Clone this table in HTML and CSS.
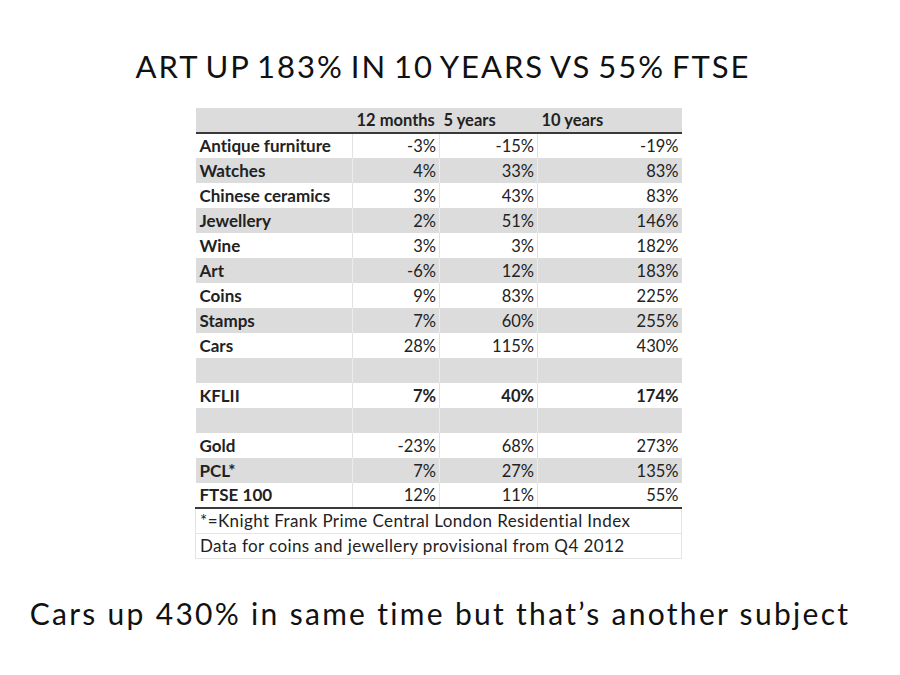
FILE: index.html
```html
<!DOCTYPE html>
<html>
<head>
<meta charset="utf-8">
<link rel="stylesheet" href="styles.css">
</head>
<body>
<div class="slide">
  <h1 class="title">ART UP 183% IN 10 YEARS VS 55% FTSE</h1>
  <div class="table-wrap">
    <table class="data">
      <colgroup>
        <col class="c1"><col class="c2"><col class="c3"><col class="c4">
      </colgroup>
      <thead>
        <tr class="g"><th></th><th>12 months</th><th>5 years</th><th>10 years</th></tr>
      </thead>
      <tbody>
        <tr class="w"><td class="lab">Antique furniture</td><td>-3%</td><td>-15%</td><td>-19%</td></tr>
        <tr class="g"><td class="lab">Watches</td><td>4%</td><td>33%</td><td>83%</td></tr>
        <tr class="w"><td class="lab">Chinese ceramics</td><td>3%</td><td>43%</td><td>83%</td></tr>
        <tr class="g"><td class="lab">Jewellery</td><td>2%</td><td>51%</td><td>146%</td></tr>
        <tr class="w"><td class="lab">Wine</td><td>3%</td><td>3%</td><td>182%</td></tr>
        <tr class="g"><td class="lab">Art</td><td>-6%</td><td>12%</td><td>183%</td></tr>
        <tr class="w"><td class="lab">Coins</td><td>9%</td><td>83%</td><td>225%</td></tr>
        <tr class="g"><td class="lab">Stamps</td><td>7%</td><td>60%</td><td>255%</td></tr>
        <tr class="w"><td class="lab">Cars</td><td>28%</td><td>115%</td><td>430%</td></tr>
        <tr class="g blank"><td></td><td></td><td></td><td></td></tr>
        <tr class="w bold"><td class="lab">KFLII</td><td>7%</td><td>40%</td><td>174%</td></tr>
        <tr class="g blank"><td></td><td></td><td></td><td></td></tr>
        <tr class="w"><td class="lab">Gold</td><td>-23%</td><td>68%</td><td>273%</td></tr>
        <tr class="g"><td class="lab">PCL*</td><td>7%</td><td>27%</td><td>135%</td></tr>
        <tr class="w last"><td class="lab">FTSE 100</td><td>12%</td><td>11%</td><td>55%</td></tr>
      </tbody>
      <tfoot>
        <tr class="note first"><td colspan="4">*=Knight Frank Prime Central London Residential Index</td></tr>
        <tr class="note"><td colspan="4">Data for coins and jewellery provisional from Q4 2012</td></tr>
      </tfoot>
    </table>
  </div>
  <p class="caption">Cars up 430% in same time but that’s another subject</p>
</div>
</body>
</html>
```
FILE: styles.css
```css
html, body {
  margin: 0;
  padding: 0;
  background: #fff;
}
.slide {
  width: 900px;
  height: 675px;
  display: flex;
  flex-direction: column;
  color: #111;
}
.title {
  margin: 0;
  padding: 46px 14px 0 0;
  height: 64px;
  box-sizing: border-box;
  text-align: center;
  font-family: Lato, "Open Sans", sans-serif;
  font-weight: 400;
  font-size: 31px;
  line-height: 40px;
  letter-spacing: 2px;
  word-spacing: -3px;
  white-space: nowrap;
  font-variant-ligatures: none;
}
.table-wrap {
  padding: 44px 0 0 195px;
}
.data {
  border-collapse: collapse;
  table-layout: fixed;
  width: 486px;
  font-family: Lato, "Open Sans", sans-serif;
  font-size: 16.5px;
  color: #222;
  font-variant-ligatures: none;
}
.c1 { width: 157px; }
.c2 { width: 87px; }
.c3 { width: 98px; }
.c4 { width: 144px; }
.data th,
.data td {
  height: 25px;
  padding: 0 3px 0 4px;
  box-sizing: border-box;
  line-height: 24px;
  white-space: nowrap;
  overflow: hidden;
}
.data th {
  text-align: left;
  font-weight: 700;
  border-bottom: 2px solid #3a3a3a;
}
.data td { text-align: right; }
.data td.lab {
  text-align: left;
  font-weight: 700;
  font-size: 17px;
}
.data tr.g { background: #dcdcdc; }
.data tr.w { background: #fff; }
.data tr.w td { border-right: 1px solid #e2e2e2; }
.data tr.g td { border-right: 1px solid #ececec; }
.data tr.w td:last-child,
.data tr.g td:last-child { border-right: none; }
.data tr.bold td { font-weight: 700; }
.data tr.last td { border-bottom: 2px solid #3a3a3a; }
.data tr.note td {
  text-align: left;
  font-weight: 400;
  font-size: 17px;
  letter-spacing: 0.4px;
  border: 1px solid #e4e4e4;
  background: #fff;
}
.caption {
  margin: 0;
  padding: 34px 20px 0 0;
  text-align: center;
  font-family: Lato, "Open Sans", sans-serif;
  font-size: 30px;
  line-height: 40px;
  letter-spacing: 2.3px;
  white-space: nowrap;
  font-variant-ligatures: none;
}
```
